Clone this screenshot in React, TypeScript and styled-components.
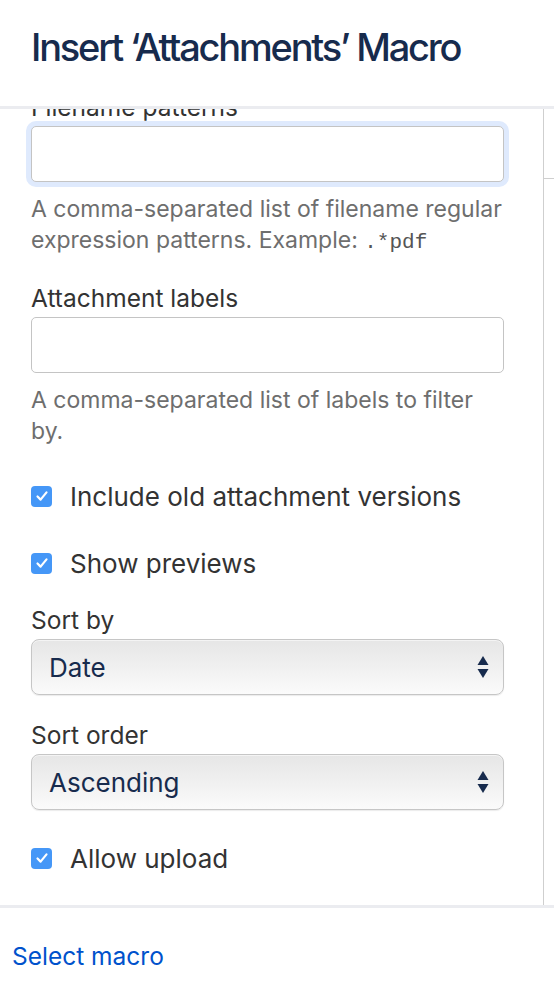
import styled, { createGlobalStyle } from 'styled-components'

const GlobalStyle = createGlobalStyle`
    html, body {
        margin: 0;
        padding: 0;
        background: #fff;
    }
    * {
        box-sizing: border-box;
    }
`

const Page = styled.div`
    display: flex;
    flex-direction: column;
    height: 999px;
    font-family: Inter, "Liberation Sans", sans-serif;
    color: #333;
    overflow: hidden;
`

const Header = styled.header`
    height: 109px;
    padding: 22px 31px 0;
    border-bottom: 3px solid #ebecf0;
    flex-shrink: 0;
`

const Title = styled.h1`
    margin: 0;
    font-size: 38px;
    line-height: 50px;
    font-weight: 500;
    letter-spacing: -2.2px;
    color: #172b4d;
`

const Body = styled.div`
    flex: 1;
    display: flex;
    overflow: hidden;
`

const Panel = styled.div`
    flex: 1;
    border-right: 1px solid #cfcfcf;
    overflow: hidden;
`

const Gutter = styled.div`
    width: 10px;
    flex-shrink: 0;
`

const GutterTab = styled.div`
    height: 70px;
    border-bottom: 1px solid #cfcfcf;
`

const Form = styled.form`
    display: flex;
    flex-direction: column;
    padding: 0 39px 0 31px;
    margin-top: -18px;
`

const Field = styled.div<{ $gap: number }>`
    display: flex;
    flex-direction: column;
    margin-bottom: ${p => p.$gap}px;
`

const Label = styled.label`
    font-size: 24.5px;
    line-height: 32px;
    color: #333;
    margin-bottom: 3px;
`

const TextInput = styled.input<{ $focused?: boolean }>`
    height: 56px;
    width: 100%;
    border: 1px solid #c4c4c4;
    border-radius: 5px;
    background: #fff;
    font-size: 24px;
    outline: none;
    box-shadow: ${p => (p.$focused ? '0 0 0 5px #dfeafd' : 'none')};
`

const Help = styled.div`
    margin-top: 12px;
    font-size: 23px;
    line-height: 31px;
    color: #6e6e6e;
`

const Code = styled.code`
    font-family: "Liberation Mono", monospace;
    font-size: 21px;
    color: #555;
`

const CheckRow = styled.label<{ $gap: number }>`
    display: flex;
    align-items: center;
    gap: 18px;
    height: 32px;
    margin-bottom: ${p => p.$gap}px;
    font-size: 26px;
    color: #333;
`

const Box = styled.span`
    width: 21px;
    height: 21px;
    border-radius: 4px;
    background: #4597f7;
    display: flex;
    align-items: center;
    justify-content: center;
    flex-shrink: 0;
`

const SelectBox = styled.div`
    height: 56px;
    display: flex;
    align-items: center;
    justify-content: space-between;
    padding: 0 14px 0 17px;
    border: 1px solid #c6c6c6;
    border-radius: 8px;
    background: linear-gradient(#e6e6e6, #f1f1f1 55%, #fbfbfb);
    box-shadow: inset 0 1px 0 #f4f4f4, 0 1px 1px rgba(0, 0, 0, 0.08);
    font-size: 26px;
    color: #172b4d;
`

const Footer = styled.footer`
    height: 94px;
    flex-shrink: 0;
    border-top: 3px solid #ebecf0;
    display: flex;
    align-items: center;
    padding: 4px 12px 0;
`

const Link = styled.a`
    font-size: 24.5px;
    color: #0052cc;
    text-decoration: none;
`

const Check = () => (
    <Box>
        <svg width="14" height="14" viewBox="0 0 14 14">
            <path d="M2.5 7.5 L5.6 10.6 L11.5 3.4" fill="none" stroke="#fff" strokeWidth="2.2" strokeLinecap="round" strokeLinejoin="round" />
        </svg>
    </Box>
)

const Arrows = () => (
    <svg width="12" height="24" viewBox="0 0 12 24">
        <path d="M6 1 L11.5 10 L0.5 10 Z" fill="#172b4d" />
        <path d="M6 23 L11.5 14 L0.5 14 Z" fill="#172b4d" />
    </svg>
)

const Select: React.FC<{ value: string }> = ({ value }) => (
    <SelectBox>
        <span>{value}</span>
        <Arrows />
    </SelectBox>
)

export default function App() {
    return (
        <>
            <GlobalStyle />
            <Page>
                <Header>
                    <Title>Insert ‘Attachments’ Macro</Title>
                </Header>
                <Body>
                    <Panel>
                        <Form onSubmit={e => e.preventDefault()}>
                            <Field $gap={24}>
                                <Label>Filename patterns</Label>
                                <TextInput $focused />
                                <Help>
                                    A comma-separated list of filename regular expression patterns. Example: <Code>.*pdf</Code>
                                </Help>
                            </Field>
                            <Field $gap={33}>
                                <Label>Attachment labels</Label>
                                <TextInput />
                                <Help>A comma-separated list of labels to filter by.</Help>
                            </Field>
                            <CheckRow $gap={35}>
                                <Check />
                                Include old attachment versions
                            </CheckRow>
                            <CheckRow $gap={25}>
                                <Check />
                                Show previews
                            </CheckRow>
                            <Field $gap={24}>
                                <Label>Sort by</Label>
                                <Select value="Date" />
                            </Field>
                            <Field $gap={32}>
                                <Label>Sort order</Label>
                                <Select value="Ascending" />
                            </Field>
                            <CheckRow $gap={0}>
                                <Check />
                                Allow upload
                            </CheckRow>
                        </Form>
                    </Panel>
                    <Gutter>
                        <GutterTab />
                    </Gutter>
                </Body>
                <Footer>
                    <Link href="#">Select macro</Link>
                </Footer>
            </Page>
        </>
    )
}
